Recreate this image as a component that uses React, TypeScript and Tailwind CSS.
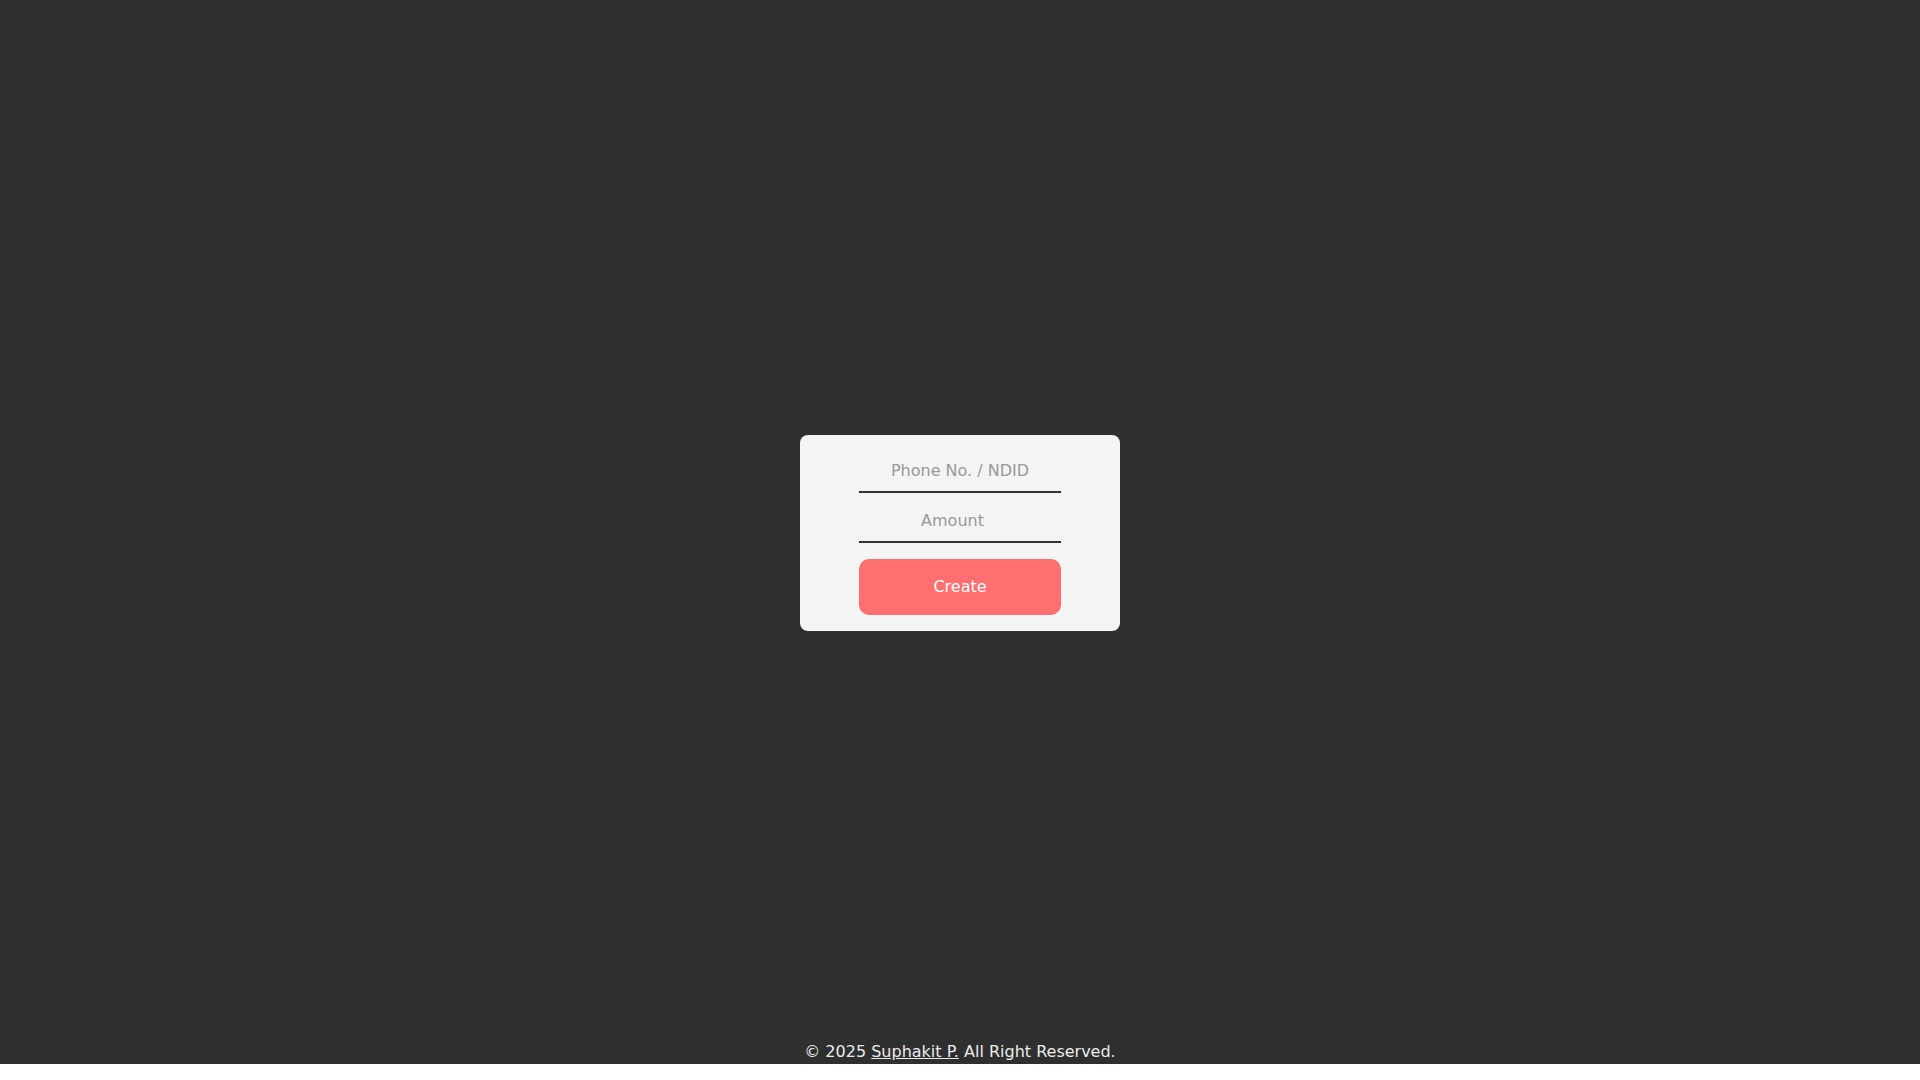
export default function App() {
  return (
    <div className="flex h-[1064px] flex-col bg-[#2e2f2e] font-['DejaVu_Sans',sans-serif]">
      <main className="flex flex-1 items-center justify-center pt-[26px]">
        <form
          onSubmit={(e) => e.preventDefault()}
          className="flex w-[320px] flex-col items-center rounded-lg bg-[#f4f4f4] pt-[8px] pb-[16px]"
        >
          <input
            type="text"
            placeholder="Phone No. / NDID"
            className="h-[50px] w-[202px] border-b-2 border-[#333333] bg-transparent pt-[7px] text-center text-base text-[#333] outline-none placeholder:text-[#999999]"
          />
          <input
            type="number"
            placeholder="Amount"
            className="h-[50px] w-[202px] border-b-2 border-[#333333] bg-transparent pt-[7px] text-center text-base text-[#333] outline-none placeholder:text-[#999999]"
          />
          <button
            type="submit"
            className="mt-[16px] h-[56px] w-[202px] rounded-[10px] bg-[#ff6f6f] text-base text-white"
          >
            Create
          </button>
        </form>
      </main>
      <footer className="h-[24px] text-center text-base leading-6 text-[#ececec]">
        © 2025{' '}
        <a href="#" className="underline">
          Suphakit P.
        </a>{' '}
        All Right Reserved.
      </footer>
    </div>
  );
}
